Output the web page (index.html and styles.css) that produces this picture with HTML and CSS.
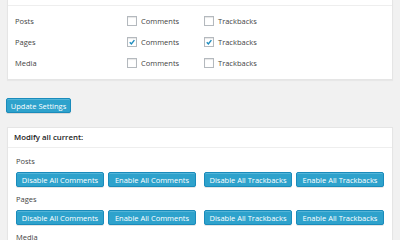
FILE: index.html
```html
<!DOCTYPE html>
<html lang="en">
<head>
    <meta charset="UTF-8">
    <meta name="viewport" content="width=device-width, initial-scale=1.0">
    <title>Comment Settings</title>
    <link rel="stylesheet" href="styles.css">
</head>
<body>
    <div class="wrap">
        <div class="panel">
            <div class="panel-top"></div>
            <div class="panel-body settings">
                <div class="setting-row">
                    <span class="row-label">Posts</span>
                    <label class="check"><span class="box"></span>Comments</label>
                    <label class="check"><span class="box"></span>Trackbacks</label>
                </div>
                <div class="setting-row">
                    <span class="row-label">Pages</span>
                    <label class="check"><span class="box checked"><svg viewBox="0 0 10 10"><path d="M2.2 5.4 L4.2 7.4 L8 2.6" /></svg></span>Comments</label>
                    <label class="check"><span class="box checked"><svg viewBox="0 0 10 10"><path d="M2.2 5.4 L4.2 7.4 L8 2.6" /></svg></span>Trackbacks</label>
                </div>
                <div class="setting-row">
                    <span class="row-label">Media</span>
                    <label class="check"><span class="box"></span>Comments</label>
                    <label class="check"><span class="box"></span>Trackbacks</label>
                </div>
            </div>
        </div>

        <button class="button primary update">Update Settings</button>

        <div class="panel">
            <h3 class="panel-head">Modify all current:</h3>
            <div class="panel-body bulk">
                <div class="bulk-group">
                    <div class="bulk-label">Posts</div>
                    <div class="bulk-buttons">
                        <button class="button primary">Disable All Comments</button>
                        <button class="button primary">Enable All Comments</button>
                        <button class="button primary pair">Disable All Trackbacks</button>
                        <button class="button primary">Enable All Trackbacks</button>
                    </div>
                </div>
                <div class="bulk-group">
                    <div class="bulk-label">Pages</div>
                    <div class="bulk-buttons">
                        <button class="button primary">Disable All Comments</button>
                        <button class="button primary">Enable All Comments</button>
                        <button class="button primary pair">Disable All Trackbacks</button>
                        <button class="button primary">Enable All Trackbacks</button>
                    </div>
                </div>
                <div class="bulk-group">
                    <div class="bulk-label">Media</div>
                    <div class="bulk-buttons">
                        <button class="button primary">Disable All Comments</button>
                        <button class="button primary">Enable All Comments</button>
                        <button class="button primary pair">Disable All Trackbacks</button>
                        <button class="button primary">Enable All Trackbacks</button>
                    </div>
                </div>
            </div>
        </div>
    </div>
</body>
</html>
```

FILE: styles.css
```css
body {
    font-family: "Open Sans", "Noto Sans", sans-serif;
    font-size: 7.5px;
    margin: 0;
    padding: 0;
    background-color: #f1f1f1;
    color: #444;
}
.wrap {
    padding: 0 7px;
}
/* Panels */
.panel {
    background-color: #fff;
    border: 1px solid #e5e5e5;
    border-top: none;
    box-shadow: 0 1px 1px rgba(0, 0, 0, 0.04);
}
.panel-top {
    height: 5px;
    border-bottom: 1px solid #eee;
}
.panel-head {
    margin: 0;
    height: 19px;
    line-height: 19px;
    padding: 0 6px;
    font-size: 7.8px;
    font-weight: 600;
    color: #222;
    border-top: 1px solid #e5e5e5;
    border-bottom: 1px solid #eee;
}
/* Settings rows */
.settings {
    padding: 4px 7px 6px;
}
.setting-row {
    display: flex;
    align-items: center;
    height: 21px;
}
.row-label {
    width: 112px;
}
.check {
    display: flex;
    align-items: center;
    width: 77px;
}
.box {
    width: 8px;
    height: 8px;
    border: 1px solid #b4b9be;
    background-color: #fff;
    box-shadow: inset 0 1px 1px rgba(0, 0, 0, 0.1);
    margin-right: 4px;
    display: flex;
    align-items: center;
    justify-content: center;
}
.box svg {
    width: 8px;
    height: 8px;
}
.box svg path {
    fill: none;
    stroke: #1e8cbe;
    stroke-width: 1.8;
}
/* Buttons */
.button {
    font-family: inherit;
    font-size: 7.5px;
    height: 15px;
    padding: 0 6px;
    border-radius: 2px;
    cursor: pointer;
}
.button.primary {
    background-color: #2ea2cc;
    border: 1px solid #1a8bbb;
    color: #fff;
    box-shadow: inset 0 1px 0 rgba(120, 200, 230, 0.5), 0 1px 0 rgba(0, 0, 0, 0.1);
}
.update {
    display: block;
    margin: 18px 0 14px -1px;
    width: 65px;
    padding: 0;
}
/* Bulk actions */
.bulk {
    padding: 0 8px;
}
.bulk-group {
    padding-top: 7px;
}
.bulk-group:first-child {
    padding-top: 8px;
}
.bulk-label {
    height: 10px;
    line-height: 10px;
    margin-bottom: 6px;
}
.bulk-buttons {
    display: flex;
    gap: 4px;
}
.bulk-buttons .button {
    width: 88px;
    padding: 0;
}
.bulk-buttons .pair {
    margin-left: 4px;
}
```
